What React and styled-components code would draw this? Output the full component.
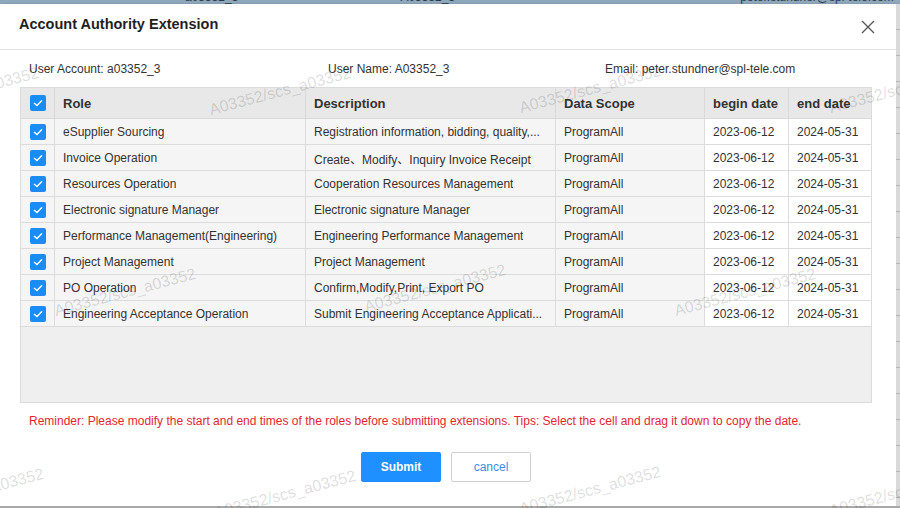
import React from "react";
import styled, { createGlobalStyle } from "styled-components";

const GlobalStyle = createGlobalStyle`
  html, body { margin: 0; padding: 0; }
  body { font-family: "Liberation Sans", Arial, "Noto Sans CJK SC", sans-serif; }
  * { box-sizing: border-box; }
`;

const Page = styled.div`
  position: relative;
  width: 900px;
  height: 508px;
  overflow: hidden;
  background: #c9c9c9;
  display: flex;
  flex-direction: column;
`;

const TopStrip = styled.div`
  height: 4px;
  flex: none;
  background: #8ea7bb;
  overflow: hidden;
  display: flex;
  font-size: 12px;
  color: #2c3a46;
`;

const StripText = styled.span`
  margin-top: -10px;
  margin-left: ${(p) => p.$ml}px;
  white-space: nowrap;
  line-height: 14px;
`;

const Middle = styled.div`
  display: flex;
  height: 502px;
  flex: none;
`;

const RightStrip = styled.div`
  flex: 1;
  background: repeating-linear-gradient(
    to bottom,
    #dadada 0px,
    #dadada 25px,
    #b4b4b4 25px,
    #b4b4b4 26px
  );
`;

const BottomStrip = styled.div`
  flex: 1;
  background: #a9a9a9;
`;

const Dialog = styled.div`
  width: 896px;
  height: 502px;
  background: #fff;
  display: flex;
  flex-direction: column;
  box-shadow: 1px 1px 3px rgba(0, 0, 0, 0.25);
`;

const Header = styled.div`
  height: 46px;
  flex: none;
  display: flex;
  align-items: center;
  justify-content: space-between;
  padding: 0 21px 5px 19px;
  border-bottom: 1px solid #e3e3e3;
`;

const Title = styled.div`
  font-size: 14.5px;
  font-weight: bold;
  color: #1f1f1f;
`;

const CloseButton = styled.button`
  border: none;
  background: none;
  padding: 0;
  width: 14px;
  height: 14px;
  margin-top: 6px;
  display: flex;
  cursor: pointer;
`;

const InfoRow = styled.div`
  height: 37px;
  flex: none;
  display: grid;
  grid-template-columns: 299px 277px 1fr;
  align-items: center;
  padding: 0 0 0 29px;
  font-size: 12px;
  color: #333;
`;

const TableWrap = styled.div`
  margin-left: 20px;
  width: 852px;
  height: 316px;
  flex: none;
  border: 1px solid #dcdcdc;
  background: #efefef;
`;

const Grid = styled.div`
  display: grid;
  grid-template-columns: 34px 251px 250px 149px 84px 82px;
`;

const HeadCell = styled.div`
  height: 31px;
  background: #e8e8e8;
  border-right: ${(p) => (p.$last ? "none" : "1px solid #d9d9d9")};
  border-bottom: 1px solid #d9d9d9;
  display: flex;
  align-items: center;
  justify-content: ${(p) => (p.$center ? "center" : "flex-start")};
  padding: ${(p) => (p.$center ? "0" : "0 8px")};
  font-size: 13px;
  font-weight: bold;
  color: #333;
`;

const Cell = styled.div`
  height: 26px;
  background: ${(p) => (p.$editable ? "#ffffff" : "#f5f5f5")};
  border-right: ${(p) => (p.$last ? "none" : "1px solid #dcdcdc")};
  border-bottom: 1px solid #dcdcdc;
  display: flex;
  align-items: center;
  justify-content: ${(p) => (p.$center ? "center" : "flex-start")};
  padding: ${(p) => (p.$center ? "0" : "1px 8px 0")};
  font-size: 12px;
  color: #333;
  white-space: nowrap;
  overflow: hidden;
`;

const CellText = styled.span`
  overflow: hidden;
  text-overflow: ellipsis;
`;

const Check = styled.span`
  width: 16px;
  height: 16px;
  border-radius: 2px;
  background: #1a8cf5;
  display: flex;
  align-items: center;
  justify-content: center;
`;

const Reminder = styled.div`
  margin-top: 9px;
  padding-left: 29px;
  line-height: 18px;
  font-size: 12px;
  color: #e4262f;
  white-space: nowrap;
`;

const Footer = styled.div`
  display: flex;
  justify-content: center;
  gap: 10px;
  padding-top: 22px;
  padding-right: 4px;
`;

const Button = styled.button`
  width: 80px;
  height: 30px;
  border-radius: 2px;
  font-family: inherit;
  font-size: 12px;
  cursor: pointer;
  border: 1px solid ${(p) => (p.$primary ? "#1e90ff" : "#d0d0d0")};
  background: ${(p) => (p.$primary ? "#1e90ff" : "#fff")};
  color: ${(p) => (p.$primary ? "#fff" : "#3a8ee6")};
  font-weight: ${(p) => (p.$primary ? "bold" : "normal")};
`;

const Watermark = styled.span`
  position: absolute;
  left: ${(p) => p.$x}px;
  top: ${(p) => p.$y - 18}px;
  line-height: 18px;
  font-size: 16px;
  white-space: nowrap;
  color: rgba(0, 0, 0, 0.15);
  transform: rotate(-15deg);
  transform-origin: 0 100%;
  pointer-events: none;
`;

const CheckIcon = () => (
  <svg width="10" height="8" viewBox="0 0 10 8">
    <path d="M1 4 L4 6.6 L9 1.2" fill="none" stroke="#fff" strokeWidth="1.4" />
  </svg>
);

const rows = [
  ["eSupplier Sourcing", "Registration information, bidding, quality,..."],
  ["Invoice Operation", "Create、Modify、Inquiry Invoice Receipt"],
  ["Resources Operation", "Cooperation Resources Management"],
  ["Electronic signature Manager", "Electronic signature Manager"],
  ["Performance Management(Engineering)", "Engineering Performance Management"],
  ["Project Management", "Project Management"],
  ["PO Operation", "Confirm,Modify,Print, Export PO"],
  ["Engineering Acceptance Operation", "Submit Engineering Acceptance Applicati..."],
];

const marks = [
  [-100, 119], [212, 119], [522, 117], [832, 117],
  [57, 320], [367, 316], [677, 320],
  [-95, 520], [217, 522], [522, 518], [832, 520],
];

export default function App() {
  return (
    <>
      <GlobalStyle />
      <Page>
        <TopStrip>
          <StripText $ml={185}>a03352_3</StripText>
          <StripText $ml={162}>A03352_3</StripText>
          <StripText $ml={285}>peter.stundner@spl-tele.com</StripText>
        </TopStrip>
        <Middle>
          <Dialog>
            <Header>
              <Title>Account Authority Extension</Title>
              <CloseButton aria-label="close">
                <svg width="14" height="14" viewBox="0 0 14 14">
                  <path d="M1 1 L13 13 M13 1 L1 13" stroke="#555" strokeWidth="1.3" />
                </svg>
              </CloseButton>
            </Header>
            <InfoRow>
              <span>User Account: a03352_3</span>
              <span>User Name: A03352_3</span>
              <span>Email: peter.stundner@spl-tele.com</span>
            </InfoRow>
            <TableWrap>
              <Grid>
                <HeadCell $center>
                  <Check><CheckIcon /></Check>
                </HeadCell>
                <HeadCell>Role</HeadCell>
                <HeadCell>Description</HeadCell>
                <HeadCell>Data Scope</HeadCell>
                <HeadCell>begin date</HeadCell>
                <HeadCell $last>end date</HeadCell>
                {rows.map(([role, desc]) => (
                  <React.Fragment key={role}>
                    <Cell $center>
                      <Check><CheckIcon /></Check>
                    </Cell>
                    <Cell><CellText>{role}</CellText></Cell>
                    <Cell><CellText>{desc}</CellText></Cell>
                    <Cell><CellText>ProgramAll</CellText></Cell>
                    <Cell $editable>2023-06-12</Cell>
                    <Cell $editable $last>2024-05-31</Cell>
                  </React.Fragment>
                ))}
              </Grid>
            </TableWrap>
            <Reminder>
              Reminder: Please modify the start and end times of the roles before submitting extensions. Tips: Select the cell and drag it down to copy the date.
            </Reminder>
            <Footer>
              <Button $primary>Submit</Button>
              <Button>cancel</Button>
            </Footer>
          </Dialog>
          <RightStrip />
        </Middle>
        <BottomStrip />
        {marks.map(([x, y]) => (
          <Watermark key={`${x}-${y}`} $x={x} $y={y}>
            A03352/scs_a03352
          </Watermark>
        ))}
      </Page>
    </>
  );
}
